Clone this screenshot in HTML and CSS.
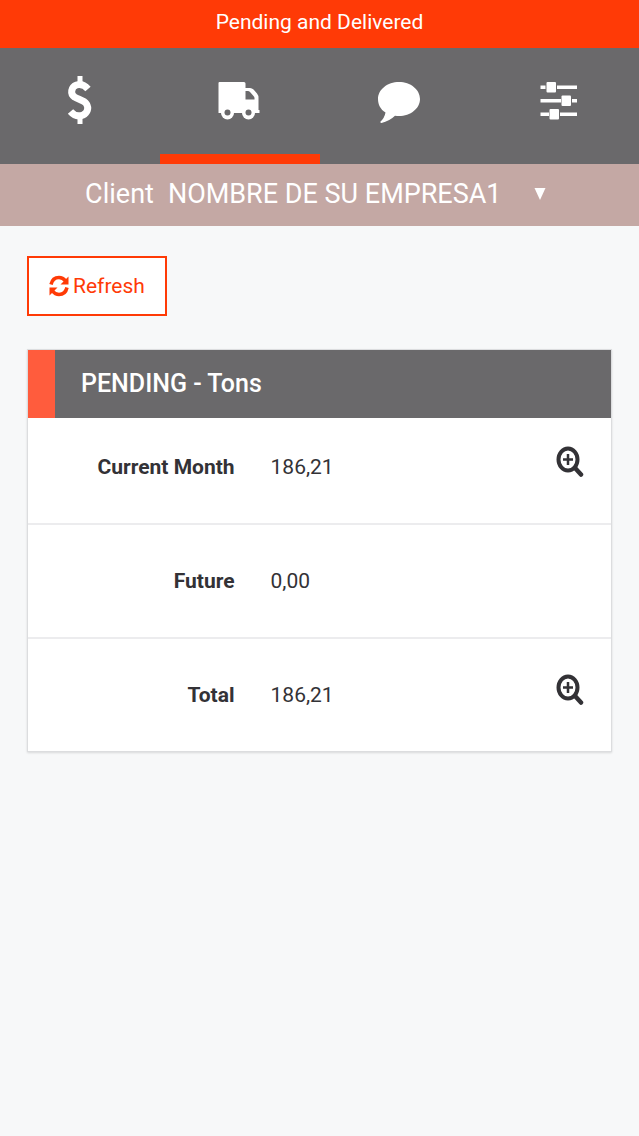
FILE: index.html
```html
<!DOCTYPE html>
<html lang="en">
<head>
  <meta charset="UTF-8">
  <meta name="viewport" content="width=device-width, initial-scale=1.0">
  <title>Pending and Delivered</title>
  <link rel="stylesheet" href="styles.css">
</head>
<body>
  <header class="title-bar">
    <h1>Pending and Delivered</h1>
  </header>

  <!-- Tabs -->
  <nav class="tabs">
    <a href="#payments" class="tab" aria-label="Payments">
      <svg width="48" height="48" viewBox="0 0 48 48" fill="none" stroke="#fff">
        <path d="M24 0v8M24 40v8" stroke-width="5"/>
        <path d="M32 13C28.500 9 24 8 20.500 9C15 11 14 18 18.500 21C22 23.500 28 24 30.500 28C33 32 31.500 37 27 39C22 41 17.500 39 14.500 35.500" stroke-width="7"/>
      </svg>
    </a>
    <a href="#pending" class="tab active" aria-label="Pending and delivered" aria-current="page">
      <svg width="48" height="48" viewBox="1 -1 48 48" fill="#fff">
        <path fill-rule="evenodd" d="M4.500 5h24.500q1.500 0 1.500 1.500V11h4.500q2 0 3.500 1.500l3.500 4q1.500 2 1.500 4V33h1v3H3.500v-3V6q0-1 1-1zM30.500 14v8.500H39.500v-1.500q0-1-1-2l-3.500-4q-1-1-2-1z"/>
        <circle cx="12.500" cy="36" r="6.500"/>
        <circle cx="33.500" cy="36" r="6.500"/>
        <circle cx="12.500" cy="35.500" r="3" fill="#6a696b"/>
        <circle cx="33.500" cy="35.500" r="3" fill="#6a696b"/>
      </svg>
    </a>
    <a href="#messages" class="tab" aria-label="Messages">
      <svg width="48" height="48" viewBox="0 -1 48 48" fill="#fff">
        <path d="M24 5C35.500 5 45 12.500 45 22S35.500 39 24 39Q22 39 20 38.700Q14.500 44 6.500 46Q5 46 5.500 44.500Q9.500 41 10.500 35.500C5.500 32.500 3 27.500 3 22C3 12.500 12.500 5 24 5z"/>
      </svg>
    </a>
    <a href="#settings" class="tab" aria-label="Settings">
      <svg width="48" height="48" viewBox="0 -1 48 48" fill="#fff">
        <path d="M5.500 8.500h5v3.500h-5zM22 8.500h20v3.500H22zM5.500 22h20.500v3.500H5.500zM37 22h5v3.500h-5zM5.500 35.500h8.500v3.500H5.500zM25 35.500h17v3.500H25z"/>
        <rect x="11.500" y="5" width="9.500" height="10.500" rx="1"/>
        <rect x="26.500" y="18.500" width="9.500" height="10.500" rx="1"/>
        <rect x="14.500" y="32" width="9.500" height="10.500" rx="1"/>
      </svg>
    </a>
  </nav>

  <!-- Client selector -->
  <div class="client-bar">
    <label for="client">Client</label>
    <div class="client-select">
      <select id="client">
        <option>NOMBRE DE SU EMPRESA1</option>
      </select>
      <svg class="arrow" width="12" height="12" viewBox="0 0 12 12" fill="#fff"><path d="M0.500 0h11L6 12z"/></svg>
    </div>
  </div>

  <main class="content">
    <button type="button" class="refresh">
      <svg width="20" height="22" viewBox="0 0 20 22" fill="none" stroke="#ff3a06" stroke-width="3.500">
        <path d="M2 9.500C3 5 6 2.500 10 2.500c3 0 5 1.500 6.500 3.500"/>
        <path d="M18 12.500C17 17 14 19.500 10 19.500c-3 0-5-1.500-6.500-3.500"/>
        <path d="M19.500 1.500v8h-8zM0.500 20.500v-8h8z" fill="#ff3a06" stroke="none"/>
      </svg>
      Refresh
    </button>

    <table class="panel">
      <thead>
        <tr>
          <th colspan="3">PENDING - Tons</th>
        </tr>
      </thead>
      <tbody>
        <tr>
          <th scope="row">Current Month</th>
          <td>186,21</td>
          <td class="action">
            <button type="button" class="detail" aria-label="View current month">
              <svg width="28" height="32" viewBox="0 0 28 32" fill="none" stroke="#333236">
                <ellipse cx="12" cy="13.500" rx="9.500" ry="11" stroke-width="4"/>
                <path d="M12 8v11M7 13.500h10" stroke-width="2.500"/>
                <path d="M19.500 22.500l5.500 6" stroke-width="4.500" stroke-linecap="round"/>
              </svg>
            </button>
          </td>
        </tr>
        <tr>
          <th scope="row">Future</th>
          <td>0,00</td>
          <td class="action"></td>
        </tr>
        <tr>
          <th scope="row">Total</th>
          <td>186,21</td>
          <td class="action">
            <button type="button" class="detail" aria-label="View total">
              <svg width="28" height="32" viewBox="0 0 28 32" fill="none" stroke="#333236">
                <ellipse cx="12" cy="13.500" rx="9.500" ry="11" stroke-width="4"/>
                <path d="M12 8v11M7 13.500h10" stroke-width="2.500"/>
                <path d="M19.500 22.500l5.500 6" stroke-width="4.500" stroke-linecap="round"/>
              </svg>
            </button>
          </td>
        </tr>
      </tbody>
    </table>
  </main>
</body>
</html>
```

FILE: styles.css
```css
* {
  box-sizing: border-box;
}
body {
  margin: 0;
  font-family: Roboto, "Liberation Sans", sans-serif;
  font-size: 21px;
  line-height: 28px;
  color: #333236;
  background-color: #f7f8f9;
}
button, select {
  font: inherit;
  border-radius: 0;
  cursor: pointer;
}
svg {
  display: block;
}
.title-bar {
  padding: 8px 16px 12px;
  background-color: #ff3a06;
  color: #fff;
  text-align: center;
}
.title-bar h1 {
  margin: 0;
  font-size: 21px;
  font-weight: 400;
}
.tabs {
  display: flex;
  background-color: #6a696b;
}
.tab {
  flex: 1;
  display: flex;
  justify-content: center;
  padding: 28px 0 30px;
  border-bottom: 10px solid transparent;
}
.tab.active {
  border-bottom-color: #ff3a06;
}
.client-bar {
  display: flex;
  justify-content: center;
  align-items: center;
  gap: 14px;
  padding: 12px 0 14px;
  background-color: #c4a8a4;
  color: #fff;
  font-size: 27px;
  line-height: 36px;
}
.client-select {
  position: relative;
}
.client-select select {
  appearance: none;
  display: block;
  height: 36px;
  padding: 0 52px 0 0;
  border: none;
  background: transparent;
  color: #fff;
}
.client-select .arrow {
  position: absolute;
  right: 8px;
  top: 12px;
  pointer-events: none;
}
.content {
  padding: 30px 27px;
}
.refresh {
  display: flex;
  align-items: center;
  gap: 4px;
  padding: 14px 20px;
  height: 60px;
  border: 2px solid #ff3a06;
  background-color: #fff;
  color: #ff3a06;
}
.panel {
  width: 100%;
  margin-top: 33px;
  border: 1px solid #dcdddf;
  border-spacing: 0;
  background-color: #fff;
  box-shadow: 0 1px 2px rgba(0, 0, 0, 0.12);
}
.panel th, .panel td {
  padding: 0;
}
.panel thead th {
  height: 68px;
  padding-left: 26px;
  border-left: 27px solid #ff5c3d;
  background-color: #6a696b;
  color: #fff;
  font-size: 25px;
  font-weight: 500;
  text-align: left;
}
.panel tbody th, .panel tbody td {
  height: 114px;
  border-bottom: 2px solid #ececee;
  text-align: left;
}
.panel tbody tr:first-child th, .panel tbody tr:first-child td {
  height: 107px;
  padding-bottom: 8px;
}
.panel tbody tr:last-child th, .panel tbody tr:last-child td {
  height: 112px;
  border-bottom: none;
}
.panel tbody th {
  width: 38%;
  padding-right: 15px;
  font-weight: 700;
  text-align: right;
}
.panel tbody td {
  padding-left: 21px;
}
.panel tbody .action {
  padding-right: 27px;
}
.detail {
  display: block;
  margin-left: auto;
  margin-bottom: 10px;
  padding: 0;
  border: none;
  background: none;
}
```
